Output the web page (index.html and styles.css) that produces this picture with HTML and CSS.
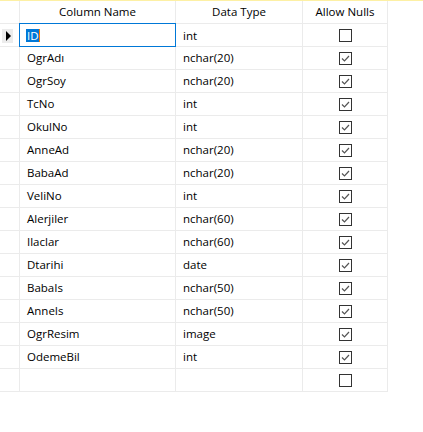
FILE: index.html
```html
<!DOCTYPE html>
<html>
<head>
<meta charset="utf-8">
<link rel="stylesheet" href="styles.css">
</head>
<body>
<div class="topline"></div>
<div class="grid">
  <div class="row head">
    <div class="cell rh"></div>
    <div class="cell c">Column Name</div>
    <div class="cell c">Data Type</div>
    <div class="cell c">Allow Nulls</div>
  </div>
  <div class="row">
    <div class="cell rh"><span class="cur"><span class="tri"></span></span></div>
    <div class="cell name sel"><span class="hl">ID</span><span class="caret"></span></div>
    <div class="cell type">int</div>
    <div class="cell chk"><span class="box"></span></div>
  </div>
  <div class="row"><div class="cell rh"></div><div class="cell name">OgrAdı</div><div class="cell type">nchar(20)</div><div class="cell chk"><span class="box on"><svg viewBox="0 0 11 11"><polyline points="2,5.5 4.5,8 9,3"/></svg></span></div></div>
  <div class="row"><div class="cell rh"></div><div class="cell name">OgrSoy</div><div class="cell type">nchar(20)</div><div class="cell chk"><span class="box on"><svg viewBox="0 0 11 11"><polyline points="2,5.5 4.5,8 9,3"/></svg></span></div></div>
  <div class="row"><div class="cell rh"></div><div class="cell name">TcNo</div><div class="cell type">int</div><div class="cell chk"><span class="box on"><svg viewBox="0 0 11 11"><polyline points="2,5.5 4.5,8 9,3"/></svg></span></div></div>
  <div class="row"><div class="cell rh"></div><div class="cell name">OkulNo</div><div class="cell type">int</div><div class="cell chk"><span class="box on"><svg viewBox="0 0 11 11"><polyline points="2,5.5 4.5,8 9,3"/></svg></span></div></div>
  <div class="row"><div class="cell rh"></div><div class="cell name">AnneAd</div><div class="cell type">nchar(20)</div><div class="cell chk"><span class="box on"><svg viewBox="0 0 11 11"><polyline points="2,5.5 4.5,8 9,3"/></svg></span></div></div>
  <div class="row"><div class="cell rh"></div><div class="cell name">BabaAd</div><div class="cell type">nchar(20)</div><div class="cell chk"><span class="box on"><svg viewBox="0 0 11 11"><polyline points="2,5.5 4.5,8 9,3"/></svg></span></div></div>
  <div class="row"><div class="cell rh"></div><div class="cell name">VeliNo</div><div class="cell type">int</div><div class="cell chk"><span class="box on"><svg viewBox="0 0 11 11"><polyline points="2,5.5 4.5,8 9,3"/></svg></span></div></div>
  <div class="row"><div class="cell rh"></div><div class="cell name">Alerjiler</div><div class="cell type">nchar(60)</div><div class="cell chk"><span class="box on"><svg viewBox="0 0 11 11"><polyline points="2,5.5 4.5,8 9,3"/></svg></span></div></div>
  <div class="row"><div class="cell rh"></div><div class="cell name">Ilaclar</div><div class="cell type">nchar(60)</div><div class="cell chk"><span class="box on"><svg viewBox="0 0 11 11"><polyline points="2,5.5 4.5,8 9,3"/></svg></span></div></div>
  <div class="row"><div class="cell rh"></div><div class="cell name">Dtarihi</div><div class="cell type">date</div><div class="cell chk"><span class="box on"><svg viewBox="0 0 11 11"><polyline points="2,5.5 4.5,8 9,3"/></svg></span></div></div>
  <div class="row"><div class="cell rh"></div><div class="cell name">BabaIs</div><div class="cell type">nchar(50)</div><div class="cell chk"><span class="box on"><svg viewBox="0 0 11 11"><polyline points="2,5.5 4.5,8 9,3"/></svg></span></div></div>
  <div class="row"><div class="cell rh"></div><div class="cell name">AnneIs</div><div class="cell type">nchar(50)</div><div class="cell chk"><span class="box on"><svg viewBox="0 0 11 11"><polyline points="2,5.5 4.5,8 9,3"/></svg></span></div></div>
  <div class="row"><div class="cell rh"></div><div class="cell name">OgrResim</div><div class="cell type">image</div><div class="cell chk"><span class="box on"><svg viewBox="0 0 11 11"><polyline points="2,5.5 4.5,8 9,3"/></svg></span></div></div>
  <div class="row"><div class="cell rh"></div><div class="cell name">OdemeBil</div><div class="cell type">int</div><div class="cell chk"><span class="box on"><svg viewBox="0 0 11 11"><polyline points="2,5.5 4.5,8 9,3"/></svg></span></div></div>
  <div class="row"><div class="cell rh"></div><div class="cell name"></div><div class="cell type"></div><div class="cell chk"><span class="box"></span></div></div>
</div>
</body>
</html>
```
FILE: styles.css
```css
html, body {
  margin: 0;
  padding: 0;
  background: #ffffff;
}
body {
  font-family: "Open Sans", "Noto Sans", sans-serif;
  font-size: 11.5px;
  color: #000;
  width: 423px;
  height: 432px;
  overflow: hidden;
}
.topline {
  height: 1px;
  background: #fdf0a4;
}
.grid {
  width: 388px;
}
.row {
  display: grid;
  grid-template-columns: 20px 156px 127px 85px;
  height: 23px;
  box-sizing: border-box;
  border-bottom: 1px solid #ebebeb;
}
.cell {
  border-right: 1px solid #ebebeb;
  display: flex;
  align-items: center;
  box-sizing: border-box;
  white-space: nowrap;
  position: relative;
  padding-bottom: 1px;
}
.cell.c {
  justify-content: center;
}
.cell.name {
  padding-left: 7px;
}
.cell.type {
  padding-left: 7px;
}
.cell.chk {
  justify-content: center;
  padding-bottom: 0;
}
.cell.rh {
  padding-bottom: 0;
}
.cell.sel {
  outline: 1px solid #0078d7;
  outline-offset: -1px;
  margin-left: -1px;
  margin-top: -1px;
  padding-left: 7px;
  padding-bottom: 0;
  height: 24px;
  width: 157px;
  z-index: 1;
}
.hl {
  background: #0078d7;
  color: #fff;
  line-height: 13px;
  height: 13px;
  padding: 0 0 0 1px;
}
.caret {
  display: inline-block;
  width: 1px;
  height: 13px;
  background: #ff7a00;
}
.cur {
  display: flex;
  align-items: center;
  justify-content: center;
  width: 11px;
  height: 14px;
  margin-left: 2px;
  background: #ececec;
}
.tri {
  width: 0;
  height: 0;
  border-top: 5px solid transparent;
  border-bottom: 5px solid transparent;
  border-left: 5px solid #000;
  margin-left: 2px;
}
.box {
  width: 13px;
  height: 13px;
  box-sizing: border-box;
  border: 1px solid #333;
  display: flex;
  align-items: center;
  justify-content: center;
  background: #fff;
}
.box svg {
  width: 11px;
  height: 11px;
}
.box polyline {
  fill: none;
  stroke: #555;
  stroke-width: 1.2;
}
```
